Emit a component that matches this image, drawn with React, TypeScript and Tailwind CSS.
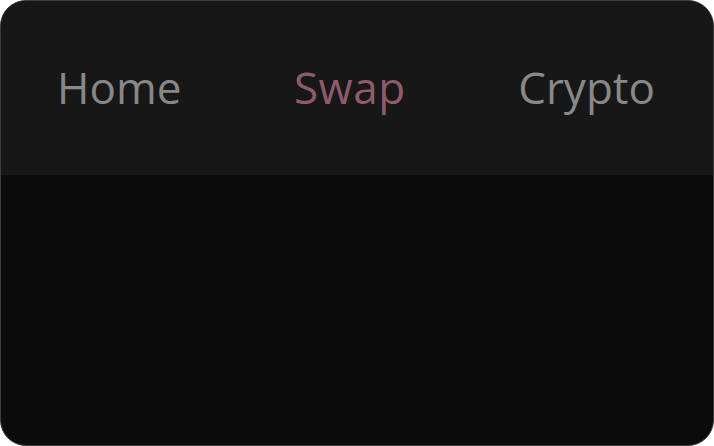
export default function App() {
  const tabs = [
    { label: "Home", active: false },
    { label: "Swap", active: true },
    { label: "Crypto", active: false },
  ];

  return (
    <div className="w-[714px] h-[446px] bg-white">
      <div className="w-full h-full flex flex-col rounded-[26px] border border-[#3d3d3d] overflow-hidden bg-[#0b0b0b]">
        {/* Tab bar */}
        <div className="h-[174px] shrink-0 bg-[#171717] flex items-center justify-between pl-[56px] pr-[58px] pb-[3px]">
          {tabs.map((tab) => (
            <span
              key={tab.label}
              className={
                tab.active
                  ? "text-[44px] leading-none tracking-[0.5px] text-[#8e5b6c] font-['Open_Sans',sans-serif]"
                  : "text-[44px] leading-none text-[#888888] font-['Open_Sans',sans-serif]"
              }
            >
              {tab.label}
            </span>
          ))}
        </div>
        <div className="flex-1" />
      </div>
    </div>
  );
}
